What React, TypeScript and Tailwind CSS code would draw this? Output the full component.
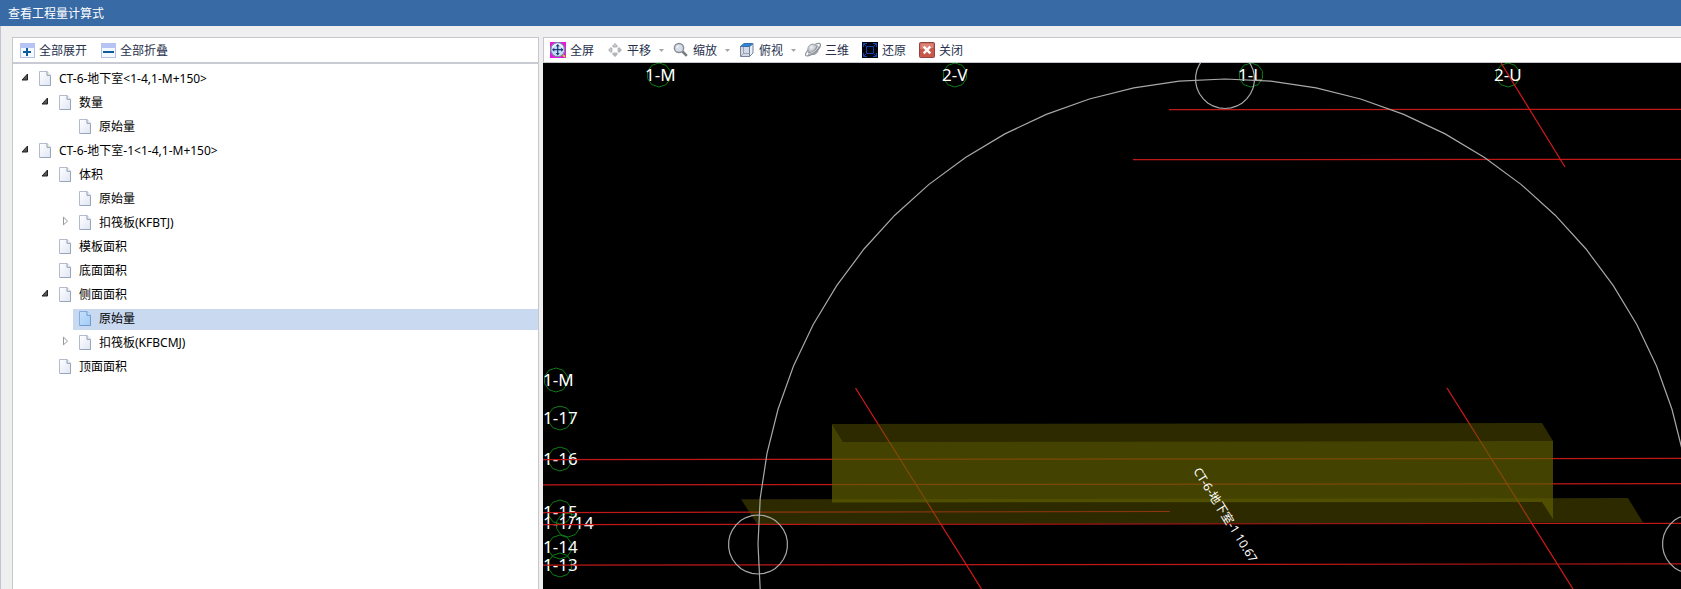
import type { ReactNode } from "react";
import { clsx } from "clsx";

interface TreeNode {
  id: string;
  label: string;
  level: number;
  state?: "open" | "closed";
  selected?: boolean;
}

const NODES: TreeNode[] = [
  { id: "ct6", label: "CT-6-地下室<1-4,1-M+150>", level: 0, state: "open" },
  { id: "ct6-count", label: "数量", level: 1, state: "open" },
  { id: "ct6-count-raw", label: "原始量", level: 2 },
  { id: "ct61", label: "CT-6-地下室-1<1-4,1-M+150>", level: 0, state: "open" },
  { id: "ct61-vol", label: "体积", level: 1, state: "open" },
  { id: "ct61-vol-raw", label: "原始量", level: 2 },
  { id: "ct61-vol-kfb", label: "扣筏板(KFBTJ)", level: 2, state: "closed" },
  { id: "ct61-form", label: "模板面积", level: 1 },
  { id: "ct61-bottom", label: "底面面积", level: 1 },
  { id: "ct61-side", label: "侧面面积", level: 1, state: "open" },
  { id: "ct61-side-raw", label: "原始量", level: 2, selected: true },
  { id: "ct61-side-kfb", label: "扣筏板(KFBCMJ)", level: 2, state: "closed" },
  { id: "ct61-top", label: "顶面面积", level: 1 },
];

const INDENT = ["ml-0", "ml-5", "ml-10"];

// Axis labels on the canvas, with the centre of the bubble behind each
const AXES = [
  { text: "1-M", x: 645, y: 81, cx: 659, cy: 75 },
  { text: "2-V", x: 942, y: 81, cx: 955, cy: 75 },
  { text: "1-L", x: 1238, y: 81, cx: 1251, cy: 75 },
  { text: "2-U", x: 1494, y: 81, cx: 1508, cy: 75 },
  { text: "1-M", x: 543, y: 386, cx: 556, cy: 380 },
  { text: "1-17", x: 543, y: 424, cx: 560, cy: 418 },
  { text: "1-16", x: 543, y: 465, cx: 560, cy: 459 },
  { text: "1-15", x: 543, y: 518, cx: 560, cy: 512 },
  { text: "1-1/14", x: 543, y: 529, cx: 568, cy: 525 },
  { text: "1-14", x: 543, y: 553, cx: 560, cy: 547 },
  { text: "1-13", x: 543, y: 571, cx: 560, cy: 565 },
];

const GRID_LINES = [
  [1169, 109.7, 1681, 109.3],
  [1133, 159.7, 1681, 159.3],
  [543, 459.6, 1681, 458.4],
  [543, 484.9, 1681, 483.6],
  [543, 512.6, 1170, 511.5],
  [543, 524.6, 1681, 523.3],
  [543, 565.2, 1681, 563.8],
];

const DIAGONALS = [
  [1501, 63, 1565, 167],
  [855.5, 388, 981.5, 589],
  [1447, 388, 1573, 589],
];

function ring(cx: number, cy: number, rx: number, ry: number, sides: number) {
  const pts: string[] = [];
  for (let i = 0; i < sides; i++) {
    const a = (i / sides) * Math.PI * 2 - Math.PI / 2;
    pts.push(`${(cx + rx * Math.cos(a)).toFixed(1)},${(cy + ry * Math.sin(a)).toFixed(1)}`);
  }
  return pts.join(" ");
}

function BoxIcon({ plus }: { plus?: boolean }) {
  return (
    <svg width="15" height="15" viewBox="0 0 15 15" aria-hidden="true">
      <rect x="0.5" y="0.5" width="14" height="14" fill="#f5f9ff" stroke="#b4c0e6" />
      <rect x="0" y="0" width="15" height="5" fill="#b5c4f4" />
      {plus ? (
        <path d="M3 8h3V5h2v3h3v2H8v3H6v-3H3z" fill="#0d5c9c" />
      ) : (
        <rect x="2" y="8" width="11" height="2" fill="#0d5c9c" />
      )}
    </svg>
  );
}

function PageIcon({ selected }: { selected?: boolean }) {
  return (
    <svg width="12" height="16" viewBox="0 0 12 16" aria-hidden="true">
      <defs>
        <linearGradient id="page" x1="0" y1="0" x2="1" y2="1">
          <stop offset="0" stopColor="#ffffff" />
          <stop offset="1" stopColor="#dfe5f3" />
        </linearGradient>
        <linearGradient id="pageOn" x1="0" y1="0" x2="1" y2="1">
          <stop offset="0" stopColor="#c4e0fc" />
          <stop offset="1" stopColor="#a4ccf6" />
        </linearGradient>
      </defs>
      <path
        d="M.5.5h7.5l3.5 3.8v10.2H.5z"
        fill={selected ? "url(#pageOn)" : "url(#page)"}
        stroke={selected ? "#82ade0" : "#b3bccb"}
      />
      <path d="M8 .5v3.8h3.5" fill={selected ? "#d6eaff" : "#f0f3f8"} stroke={selected ? "#6797cf" : "#8c9bb2"} />
      <path d="M1 14.5h10.5V5" fill="none" stroke={selected ? "#6c9bd2" : "#98a4b8"} />
    </svg>
  );
}

function Expander({ state }: { state?: "open" | "closed" }) {
  return (
    <svg className="mb-1 shrink-0" width="20" height="10" viewBox="0 0 20 10" aria-hidden="true">
      {state === "open" && <path d="M14.5 2v6H9z" fill="#555" stroke="#222" />}
      {state === "closed" && <path d="M10.5 1.2v7.6l4-3.8z" fill="#fff" stroke="#979797" />}
    </svg>
  );
}

function FullscreenIcon() {
  return (
    <svg width="16" height="16" viewBox="0 0 16 16" aria-hidden="true">
      <rect width="16" height="16" fill="#e815e0" />
      <path d="M11 11l4 4" stroke="#8a4a3c" strokeWidth="2.5" />
      <circle cx="7.7" cy="7.7" r="7" fill="#c6dcf7" stroke="#7587a6" strokeWidth="1.2" />
      <path d="M2.5 5.5a5.8 5.8 0 0 1 10.4 0" fill="none" stroke="#eef5fe" strokeWidth="1.6" />
      <path d="M7.7 3v9.5M3 7.7h9.5" stroke="#1c3c78" strokeWidth="1.2" />
      <path d="M7.7 2l2 2.3h-4zM7.7 13.4l2-2.3h-4zM2 7.7l2.3-2v4zM13.4 7.7l-2.3-2v4z" fill="#1c3c78" />
      <path d="M13 13l2 2" stroke="#e8b05a" strokeWidth="2" />
    </svg>
  );
}

function PanIcon() {
  return (
    <svg width="16" height="16" viewBox="0 0 16 16" fill="#b3b5ba" aria-hidden="true">
      <path d="M8 1l3 3-1.2 1.4H6.2L5 4zM8 15l3-3-1.2-1.4H6.2L5 12zM1 8l3-3 1.4 1.2v3.6L4 11zM15 8l-3-3-1.4 1.2v3.6L12 11z" />
      <path d="M8 2.5L9.3 4H6.7zM2.5 8L4 6.7v2.6z" fill="#d5d7db" />
    </svg>
  );
}

function ZoomIcon() {
  return (
    <svg width="16" height="16" viewBox="0 0 16 16" aria-hidden="true">
      <path d="M9.5 9.5l4.3 4.3" stroke="#777b80" strokeWidth="2.6" />
      <circle cx="6" cy="6" r="4.6" fill="#d6ddea" stroke="#8b8f96" strokeWidth="1.5" />
      <path d="M3.8 6a2.3 2.3 0 0 1 2.2-2.3" fill="none" stroke="#fff" />
    </svg>
  );
}

function CubeIcon() {
  return (
    <svg width="16" height="16" viewBox="0 0 16 16" aria-hidden="true">
      <path d="M1.5 4.5h9v10h-9z" fill="#d3dae6" stroke="#76839a" />
      <path d="M10.5 4.5l3.5-3v9.5l-3.5 3.5z" fill="#eceff4" stroke="#76839a" />
      <path d="M1.5 4.5L5 1.5h9l-3.5 3z" fill="#2f86d6" stroke="#3a72ae" />
      <path d="M4.5 5v6.5h6M4.5 11.5l-3 3" fill="none" stroke="#98a3b6" />
    </svg>
  );
}

function OrbitIcon() {
  return (
    <svg width="16" height="16" viewBox="0 0 16 16" aria-hidden="true">
      <defs>
        <radialGradient id="orb" cx="0.35" cy="0.3" r="0.8">
          <stop offset="0" stopColor="#eef0f2" />
          <stop offset="1" stopColor="#8f959d" />
        </radialGradient>
      </defs>
      <path
        d="M10.5 2.2c2.6-1.3 4.8-1.1 5 .4.3 2.600-3.500 7-8 9.500-3.300 1.900-6.200 2.400-6.900 1.100-.5-1 .4-2.800 2.300-4.900"
        fill="none"
        stroke="#8b9199"
        strokeWidth="1.2"
      />
      <circle cx="8" cy="7.300" r="5.200" fill="url(#orb)" stroke="#868c94" strokeWidth="0.8" />
      <path d="M3.200 11.500c4 .2 8.800-3.300 10.300-7.500" fill="none" stroke="#7b8189" strokeWidth="2.400" />
      <path d="M3.200 11.500c4 .2 8.800-3.300 10.300-7.500" fill="none" stroke="#dfe2e6" strokeWidth="1.100" />
    </svg>
  );
}

function RestoreIcon() {
  return (
    <svg width="16" height="16" viewBox="0 0 16 16" aria-hidden="true">
      <rect width="16" height="16" fill="#02040f" />
      <g fill="none" stroke="#1746ae">
        <path d="M1.5 5V1.5H5M11 1.5h3.5V5M14.5 11v3.5H11M5 14.5H1.5V11" />
        <path d="M4.5 4.5h7v7h-7z" stroke="#1540a0" />
        <path d="M1.5 1.5l3 3M14.5 1.5l-3 3M1.5 14.5l3-3M14.5 14.5l-3-3" />
      </g>
    </svg>
  );
}

function CloseIcon() {
  return (
    <svg width="16" height="16" viewBox="0 0 16 16" aria-hidden="true">
      <rect x="0.5" y="0.5" width="15" height="15" rx="1" fill="#c9584a" stroke="#8f4540" />
      <path d="M1.5 7V1.5h13V6z" fill="#dc8478" />
      <path d="M4.7 4.7l6.6 6.6M11.3 4.7l-6.6 6.6" stroke="#fff" strokeWidth="2.4" />
    </svg>
  );
}

function ToolButton({ icon, label, menu }: { icon: ReactNode; label: string; menu?: boolean }) {
  return (
    <button type="button" className={clsx("flex items-center gap-1 whitespace-nowrap", !menu && "pr-1")}>
      {icon}
      <span>{label}</span>
      {menu && (
        <svg className="ml-1" width="5" height="3" viewBox="0 0 5 3" aria-hidden="true">
          <path d="M0 0h5L2.5 3z" fill="#a5a5a5" />
        </svg>
      )}
    </button>
  );
}

function Tree() {
  return (
    <ul role="tree" className="pt-[3px] font-['Noto_Sans','Noto_Sans_CJK_SC',sans-serif] text-black">
      {NODES.map((node) => (
        <li
          key={node.id}
          role="treeitem"
          aria-level={node.level + 1}
          aria-selected={!!node.selected}
          aria-expanded={node.state ? node.state === "open" : undefined}
          className={clsx("flex h-6 items-center", INDENT[node.level])}
        >
          <Expander state={node.state} />
          <button
            type="button"
            className={clsx("flex h-[21px] flex-1 items-center gap-2 pl-[6px] text-left", node.selected && "bg-[#c9d9ef]")}
          >
            <PageIcon selected={node.selected} />
            <span>{node.label}</span>
          </button>
        </li>
      ))}
    </ul>
  );
}

function Viewport() {
  return (
    <svg
      className="min-h-0 w-full flex-1 bg-black"
      viewBox="543 63 1138 526"
      preserveAspectRatio="xMinYMin slice"
      role="img"
      aria-label="三维"
    >
      <g fill="none" stroke="#0f7a16">
        {AXES.map((a) => (
          <polygon key={`${a.text}-${a.cx}-${a.cy}`} points={ring(a.cx, a.cy, 12, 12, 10)} />
        ))}
      </g>
      <g fill="#fff" fontSize="17" fontFamily="'Noto Sans', sans-serif">
        {AXES.map((a) => (
          <text key={`${a.text}-${a.x}-${a.y}`} x={a.x} y={a.y}>
            {a.text}
          </text>
        ))}
      </g>

      {/* Grid axes */}
      <g stroke="#c01818" strokeWidth="1.2">
        {GRID_LINES.map(([x1, y1, x2, y2]) => (
          <line key={y1} x1={x1} y1={y1} x2={x2} y2={y2} />
        ))}
        {DIAGONALS.map(([x1, y1, x2, y2]) => (
          <line key={x1} x1={x1} y1={y1} x2={x2} y2={y2} stroke="#d81a1a" />
        ))}
      </g>

      {/* Pile cap: slab, top face, front face */}
      <polygon points="741,499.3 1628,498 1643,522.5 757,524" fill="#5c5400" fillOpacity="0.5" />
      <polygon points="832,424 1542,423 1553,441 843,441.7" fill="#5c5400" fillOpacity="0.5" />
      <polygon points="832,424 843,441.7 1553,441 1553,519 1542,502 832,502.5" fill="#605e00" fillOpacity="0.7" />

      <g fill="none" stroke="#a8a8a8" strokeWidth="1.2">
        <polygon points={ring(1225, 544, 467, 465, 64)} />
        <polygon points={ring(1225, 79, 29.5, 29.5, 30)} />
        <polygon points={ring(758, 544.5, 29.5, 29.5, 30)} />
        <polygon points={ring(1692, 544, 29.5, 29.5, 30)} />
      </g>

      <text
        transform="translate(1193 471) rotate(58)"
        fill="#fff"
        fontSize="12"
        fontFamily="'Noto Sans', 'Noto Sans CJK SC', sans-serif"
      >
        CT-6-地下室-1 10.67
      </text>
    </svg>
  );
}

export default function App() {
  return (
    <div className="flex h-screen flex-col overflow-hidden bg-[#efefef] font-['Noto_Sans_CJK_SC',sans-serif] text-[12px] leading-4 text-[#26304c]">
      <header className="flex h-[26px] shrink-0 items-center bg-[#386aa5] px-2 text-white">
        <h1>查看工程量计算式</h1>
      </header>

      <main className="flex min-h-0 flex-1 gap-1 border-l border-[#c0c5d0] pt-[11px] pl-[11px]">
        <section className="flex w-[527px] shrink-0 flex-col border border-b-0 border-[#c5c7cc] bg-white">
          <div className="flex h-[26px] shrink-0 items-center gap-[14px] border-b-2 border-[#c8cbd1] px-[7px]">
            <button type="button" className="flex items-center gap-1">
              <BoxIcon plus />
              <span>全部展开</span>
            </button>
            <button type="button" className="flex items-center gap-1">
              <BoxIcon />
              <span>全部折叠</span>
            </button>
          </div>
          <Tree />
        </section>

        <section className="flex min-w-0 flex-1 flex-col">
          <div className="flex h-[26px] shrink-0 items-center gap-[9px] border border-r-0 border-[#c5c7cc] bg-white px-[6px]">
            <ToolButton icon={<FullscreenIcon />} label="全屏" />
            <ToolButton icon={<PanIcon />} label="平移" menu />
            <ToolButton icon={<ZoomIcon />} label="缩放" menu />
            <ToolButton icon={<CubeIcon />} label="俯视" menu />
            <ToolButton icon={<OrbitIcon />} label="三维" />
            <ToolButton icon={<RestoreIcon />} label="还原" />
            <ToolButton icon={<CloseIcon />} label="关闭" />
          </div>
          <Viewport />
        </section>
      </main>
    </div>
  );
}
